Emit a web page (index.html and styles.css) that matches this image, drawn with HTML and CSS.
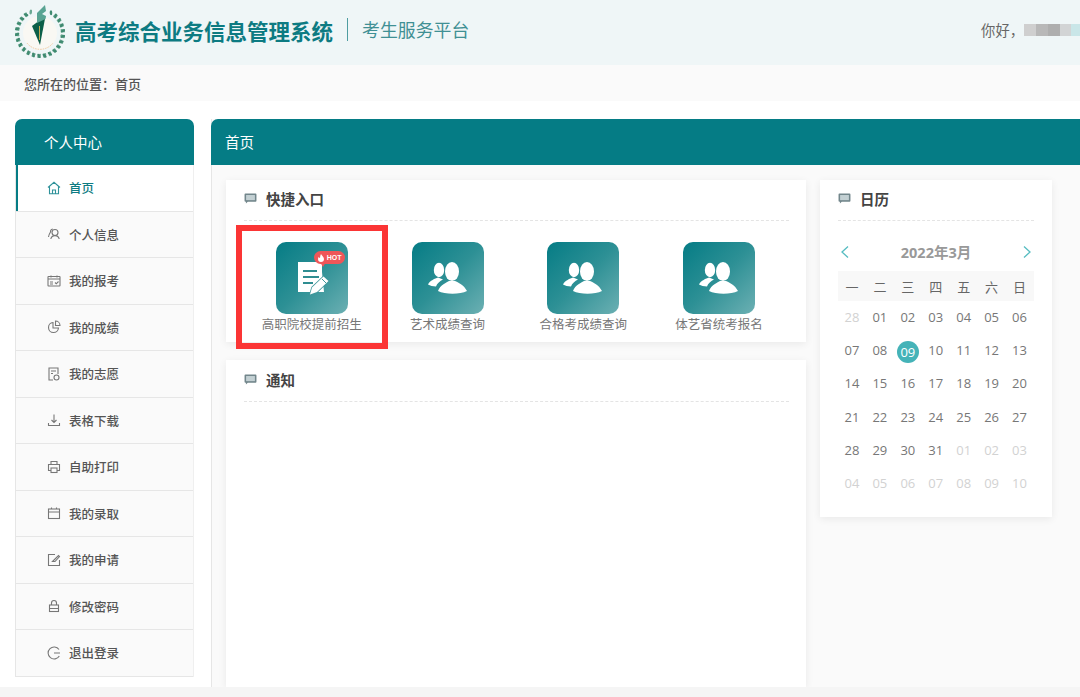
FILE: index.html
```html
<!DOCTYPE html>
<html lang="zh-CN">
<head>
<meta charset="utf-8">
<title>高考综合业务信息管理系统</title>
<link rel="stylesheet" href="styles.css">
</head>
<body>
<svg class="defs" width="0" height="0" aria-hidden="true">
  <defs>
    <symbol id="chat" viewBox="0 0 14 12">
      <path d="M1.500 .5h11a1 1 0 0 1 1 1v7a1 1 0 0 1-1 1H4L2 11.500V9.500h-.5a1 1 0 0 1-1-1v-7a1 1 0 0 1 1-1z" fill="#72868b"/>
      <rect x="2.200" y="2.200" width="9.600" height="5.600" fill="#c3d0d3"/>
    </symbol>
    <symbol id="people" viewBox="0 0 72 72">
      <ellipse cx="27" cy="28" rx="5.200" ry="7.200" fill="#fff"/>
      <path d="M16 42.500C18 38.500 23 36.500 26 35.500L31 37.500C28 39 25 41.500 24 44.500C21 44.500 18 43.500 16 42.500Z" fill="#fff"/>
      <ellipse cx="40" cy="29.500" rx="7" ry="9.500" fill="#fff"/>
      <path d="M26 49C28 43 35 40.500 37 39L43 39C46 40.500 52 43 55 49C48 52.500 33 52.500 26 49Z" fill="#fff"/>
    </symbol>
    <g id="leaf">
      <ellipse cx="22" cy="8.200" rx="1.300" ry="2.500" transform="rotate(-38 22 8.200)" fill="#3f8a70"/>
      <ellipse cx="27.500" cy="8.200" rx="1.300" ry="2.500" transform="rotate(38 27.500 8.200)" fill="#6ba892"/>
    </g>
  </defs>
</svg>

<header class="topbar">
  <div class="brand">
    <svg class="logo" viewBox="0 0 50 56" aria-label="校徽">
      <circle cx="25" cy="31" r="17" fill="#f9f8f3"/>
      <path d="M12 41a16.500 16.500 0 0 0 26 0" fill="none" stroke="#eec9a0" stroke-width="1" stroke-dasharray="1.500 1"/>
      <use href="#leaf" transform="rotate(36 25 31)"/>
      <use href="#leaf" transform="rotate(50 25 31)"/>
      <use href="#leaf" transform="rotate(64 25 31)"/>
      <use href="#leaf" transform="rotate(78 25 31)"/>
      <use href="#leaf" transform="rotate(92 25 31)"/>
      <use href="#leaf" transform="rotate(106 25 31)"/>
      <use href="#leaf" transform="rotate(120 25 31)"/>
      <use href="#leaf" transform="rotate(134 25 31)"/>
      <use href="#leaf" transform="rotate(148 25 31)"/>
      <use href="#leaf" transform="rotate(162 25 31)"/>
      <use href="#leaf" transform="rotate(176 25 31)"/>
      <use href="#leaf" transform="rotate(190 25 31)"/>
      <use href="#leaf" transform="rotate(204 25 31)"/>
      <use href="#leaf" transform="rotate(218 25 31)"/>
      <use href="#leaf" transform="rotate(232 25 31)"/>
      <use href="#leaf" transform="rotate(246 25 31)"/>
      <use href="#leaf" transform="rotate(260 25 31)"/>
      <use href="#leaf" transform="rotate(274 25 31)"/>
      <use href="#leaf" transform="rotate(288 25 31)"/>
      <use href="#leaf" transform="rotate(302 25 31)"/>
      <use href="#leaf" transform="rotate(316 25 31)"/>
      <use href="#leaf" transform="rotate(330 25 31)"/>
      <path d="M17 24 L30.500 14 L25 43 Z" fill="#0c5f48"/>
      <path d="M22 11 L30 3 L31 9 L27 12 L31 14 L30.500 17 L22 21 Z" fill="#5aa493"/>
      <path d="M24.500 24 L24.500 38" stroke="#c8a850" stroke-width="1"/>
    </svg>
    <h1 class="title">高考综合业务信息管理系统</h1>
    <span class="title-sep"></span>
    <span class="subtitle">考生服务平台</span>
  </div>
  <div class="user">
    <span class="hello">你好，</span>
    <span class="mask"><i class="m1"></i><i class="m2"></i><i class="m3"></i><i class="m4"></i><i class="m5"></i></span>
  </div>
</header>

<div class="crumbs"><span>您所在的位置：</span><span>首页</span></div>

<div class="layout">
  <aside class="side">
    <div class="side-head">个人中心</div>
    <nav class="menu">
      <a class="item active"><svg class="ico" viewBox="0 0 14 14"><path d="M1 6.500 7 1.300l6 5.200M2.500 5.500v7.200h9V5.500M5.500 12.700V9h3v3.700"/></svg>首页</a>
      <a class="item"><svg class="ico" viewBox="0 0 14 14"><circle cx="8" cy="5.500" r="3"/><path d="M3.800 12c.4-2 2-3.400 4.200-3.400s3.800 1.400 4.200 3.400M5.800 2C4 2.300 3.400 3.800 3.500 5 2.500 6.500 1.800 8 1.500 10"/></svg>个人信息</a>
      <a class="item"><svg class="ico" viewBox="0 0 14 14"><rect x="1" y="2.500" width="12" height="9.500" rx=".5"/><path d="M1 5h12M4 1.500v2M10 1.500v2M3 8h3M3 10h3M8 8.500l1.300 1.300L11.500 7.500"/></svg>我的报考</a>
      <a class="item"><svg class="ico" viewBox="0 0 14 14"><path d="M6 2.500a5 5 0 1 0 5.500 5.500H6z"/><path d="M8.500 1a4.500 4.500 0 0 1 4.500 4.500H8.500z"/></svg>我的成绩</a>
      <a class="item"><svg class="ico" viewBox="0 0 14 14"><path d="M6 13H2V1h9v6"/><path d="M4 4h5M4 6.500h2"/><circle cx="9.500" cy="10.500" r="2.500"/></svg>我的志愿</a>
      <a class="item"><svg class="ico" viewBox="0 0 14 14"><path d="M7 1.500v8M4.500 7 7 9.500 9.500 7M1.500 10v2.500h11V10"/></svg>表格下载</a>
      <a class="item"><svg class="ico" viewBox="0 0 14 14"><path d="M4 4.500V1.500h6v3M4 10.500H1.500V4.500h11v6H10"/><rect x="4" y="8" width="6" height="4.500"/></svg>自助打印</a>
      <a class="item"><svg class="ico" viewBox="0 0 14 14"><rect x="1.500" y="3" width="11" height="9.500"/><path d="M1.500 6h11M4.500 1.500V3M9.500 1.500V3"/></svg>我的录取</a>
      <a class="item"><svg class="ico" viewBox="0 0 14 14"><path d="M12.500 7v5.500h-11v-11H8"/><path d="M5.500 8.500 11.500 2.500l1 1-4.500 5z"/></svg>我的申请</a>
      <a class="item"><svg class="ico" viewBox="0 0 14 14"><rect x="2.500" y="6" width="9" height="6.500"/><path d="M4.500 6V4a2.500 2.500 0 0 1 5 0v2M2.500 9.500h9"/></svg>修改密码</a>
      <a class="item"><svg class="ico" viewBox="0 0 14 14"><path d="M12 3.500A6 6 0 1 0 12.300 10M7 7h6"/></svg>退出登录</a>
    </nav>
  </aside>

  <main class="panel">
    <div class="panel-head">首页</div>
    <div class="panel-body">
      <div class="col-main">
        <section class="card quick">
          <h2 class="card-title"><svg class="chat"><use href="#chat"/></svg>快捷入口</h2>
          <div class="tiles">
            <a class="tile">
              <span class="tile-icon">
                <svg viewBox="0 0 72 72">
                  <path d="M22 20h24v10l2 20H22z" fill="#fff"/>
                  <path d="M27 29h14M27 35h16M27 41h10" stroke="#2f8d91" stroke-width="2"/>
                  <path d="M34 52.500l2-7L47.500 34.500l5 4.500L41 50z" fill="#fff" stroke="#3f979b" stroke-width="1.500" paint-order="stroke"/>
                  <path d="M46 37l4 4" stroke="#3f979b" stroke-width="1"/>
                </svg>
                <span class="hot"><svg class="flame" viewBox="0 0 8 8"><path d="M4 0c.5 1.500 3 2.500 3 5a3 3 0 0 1-6 0c0-1 .4-1.800 1-2.300C2 3.500 2.500 4 3 4c.2-1.300.3-2.800 1-4z" fill="#fff"/></svg>HOT</span>
              </span>
              <span class="tile-text">高职院校提前招生</span>
            </a>
            <a class="tile"><span class="tile-icon"><svg viewBox="0 0 72 72"><use href="#people"/></svg></span><span class="tile-text">艺术成绩查询</span></a>
            <a class="tile"><span class="tile-icon"><svg viewBox="0 0 72 72"><use href="#people"/></svg></span><span class="tile-text">合格考成绩查询</span></a>
            <a class="tile"><span class="tile-icon"><svg viewBox="0 0 72 72"><use href="#people"/></svg></span><span class="tile-text">体艺省统考报名</span></a>
          </div>
        </section>
        <section class="card notice">
          <h2 class="card-title notice-title"><svg class="chat"><use href="#chat"/></svg>通知</h2>
        </section>
      </div>

      <section class="card calendar">
        <h2 class="card-title"><svg class="chat"><use href="#chat"/></svg>日历</h2>
        <div class="cal-month">
          <svg class="arrow" viewBox="0 0 10 14"><path d="M8 1.500 2 7l6 5.500"/></svg>
          <span>2022年3月</span>
          <svg class="arrow" viewBox="0 0 10 14"><path d="M2 1.500 8 7l-6 5.500"/></svg>
        </div>
        <div class="cal-week"><span>一</span><span>二</span><span>三</span><span>四</span><span>五</span><span>六</span><span>日</span></div>
        <div class="cal-days">
          <span class="off">28</span><span>01</span><span>02</span><span>03</span><span>04</span><span>05</span><span>06</span>
          <span>07</span><span>08</span><span class="today"><b>09</b></span><span>10</span><span>11</span><span>12</span><span>13</span>
          <span>14</span><span>15</span><span>16</span><span>17</span><span>18</span><span>19</span><span>20</span>
          <span>21</span><span>22</span><span>23</span><span>24</span><span>25</span><span>26</span><span>27</span>
          <span>28</span><span>29</span><span>30</span><span>31</span><span class="off">01</span><span class="off">02</span><span class="off">03</span>
          <span class="off">04</span><span class="off">05</span><span class="off">06</span><span class="off">07</span><span class="off">08</span><span class="off">09</span><span class="off">10</span>
        </div>
      </section>
    </div>
  </main>
</div>
<div class="foot"></div>
<div class="redbox"></div>
</body>
</html>
```

FILE: styles.css
```css
* { box-sizing: border-box; }
html, body { margin: 0; padding: 0; height: 697px; overflow: hidden; }
body {
  position: relative;
  background: #fff;
  color: #555;
  font-family: "Open Sans", "Noto Sans CJK SC", sans-serif;
  font-size: 12.5px;
  display: flex;
  flex-direction: column;
}
.defs { position: absolute; }

.topbar {
  height: 65px;
  flex: none;
  background: #eff6f7;
  display: flex;
  justify-content: space-between;
  padding-left: 15px;
}
.brand { display: flex; align-items: flex-start; }
.logo { width: 50px; height: 56px; margin-top: 2px; margin-right: 10px; }
.title {
  margin: 0;
  font-size: 21.5px;
  line-height: 61px;
  font-weight: 700;
  color: #0d7b82;
  font-family: "Noto Sans CJK SC", sans-serif;
}
.title-sep { width: 1px; height: 23px; background: #4f9da1; margin: 18px 14px 0; }
.subtitle {
  font-size: 17.9px;
  line-height: 59px;
  color: #3f9094;
  font-family: "Noto Sans CJK SC", sans-serif;
}
.user { display: flex; align-items: center; height: 58px; }
.hello { font-size: 14.3px; color: #666; font-family: "Noto Sans CJK SC", sans-serif; white-space: nowrap; }
.mask { display: flex; height: 12px; width: 56px; flex: none; margin-top: 2px; }
.mask i { display: block; height: 100%; }
.m1 { width: 12px; background: #cfcfcf; }
.m2 { width: 12px; background: #b8b8b8; }
.m3 { width: 12px; background: #aeaeae; }
.m4 { width: 11px; background: #d2d4d5; }
.m5 { width: 9px; background: #c9e6e8; }

.crumbs {
  height: 36px;
  flex: none;
  background: #fafafa;
  padding-left: 24px;
  font-size: 13px;
  line-height: 37px;
  color: #555;
  font-weight: 500;
  font-family: "Noto Sans CJK SC", sans-serif;
}

.layout {
  flex: 1;
  min-height: 0;
  display: flex;
  align-items: flex-start;
  padding: 18px 0 0 15px;
  gap: 17px;
}

.side { width: 179px; flex: none; }
.side-head {
  height: 46px;
  background: #057c85;
  color: #fff;
  border-radius: 7px 7px 0 0;
  padding-left: 29px;
  line-height: 45px;
  font-size: 14.5px;
  font-family: "Noto Sans CJK SC", sans-serif;
}
.menu { display: flex; flex-direction: column; border-left: 1px solid #e6e6e6; border-right: 1px solid #efefef; }
.item {
  height: 46.5px;
  display: flex;
  align-items: center;
  background: #fafafa;
  border-bottom: 1px solid #e6e6e6;
  padding-left: 31px;
  color: #555;
  font-weight: 500;
  font-family: "Noto Sans CJK SC", sans-serif;
}
.item.active {
  background: #fff;
  color: #0d7b82;
  box-shadow: inset 2px 0 0 #057c85;
}
.ico {
  width: 14px;
  height: 14px;
  margin-right: 8px;
  fill: none;
  stroke: #777;
  stroke-width: 1.100;
}
.active .ico { stroke: #2f929a; }

.panel {
  flex: 1;
  min-width: 0;
  align-self: stretch;
  display: flex;
  flex-direction: column;
  background: #fafafa;
  border-left: 1px solid #e6e6e6;
}
.panel-head {
  height: 46px;
  flex: none;
  margin-left: -1px;
  background: #057c85;
  color: #fff;
  border-radius: 7px 0 0 0;
  padding-left: 14px;
  line-height: 45px;
  font-size: 14.5px;
  font-family: "Noto Sans CJK SC", sans-serif;
}
.panel-body {
  flex: 1;
  min-height: 0;
  display: flex;
  align-items: flex-start;
  gap: 14px;
  padding: 15px 0 0 14px;
}
.col-main {
  width: 580px;
  flex: none;
  align-self: stretch;
  display: flex;
  flex-direction: column;
  gap: 18px;
}
.card {
  background: #fff;
  box-shadow: 0 2px 8px rgba(0, 0, 0, .07);
  padding: 0 18px;
}
.card-title {
  margin: 0;
  height: 41px;
  padding-bottom: 3px;
  display: flex;
  align-items: center;
  border-bottom: 1px dashed #e4e4e4;
  color: #444;
  font-size: 14.5px;
  font-weight: 700;
  font-family: "Noto Sans CJK SC", sans-serif;
}
.notice-title { height: 42px; }
.chat { width: 13px; height: 11px; margin-right: 9px; }

.quick { height: 162px; flex: none; padding-right: 17px; }
.tiles { display: grid; grid-template-columns: repeat(4, 135.75px); padding-top: 21px; }
.tile { display: flex; flex-direction: column; align-items: center; }
.tile-icon {
  position: relative;
  width: 72px;
  height: 72px;
  border-radius: 10px;
  background: linear-gradient(135deg, #057c85 0%, #2d9095 50%, #6cb0b3 100%);
}
.tile-icon > svg { display: block; width: 72px; height: 72px; }
.hot {
  position: absolute;
  left: 38px;
  top: 9px;
  width: 31px;
  height: 13px;
  display: flex;
  align-items: center;
  justify-content: center;
  gap: 1.500px;
  background: #ef5659;
  border-radius: 7px;
  color: #fff;
  font: 700 7px/1 "Liberation Sans", sans-serif;
}
.hot::after {
  content: "";
  position: absolute;
  left: 6px;
  top: 11px;
  border: 3px solid transparent;
  border-top: 5px solid #ef5659;
  border-bottom: 0;
}
.flame { width: 8px; height: 8px; }
.tile-text {
  margin-top: 1px;
  line-height: 18px;
  color: #777;
  font-family: "Noto Sans CJK SC", sans-serif;
}
.notice { flex: 1; padding-right: 17px; }

.calendar { width: 232px; height: 337px; flex: none; }
.cal-month {
  height: 50px;
  display: flex;
  align-items: center;
  justify-content: space-between;
  padding: 11px 2px 0 2px;
  color: #999;
  font-size: 14.5px;
  font-weight: 700;
  font-family: "Open Sans", "Noto Sans CJK SC", sans-serif;
}
.arrow { width: 10px; height: 14px; fill: none; stroke: #56bcc1; stroke-width: 1.300; }
.cal-week {
  display: grid;
  grid-template-columns: repeat(7, 1fr);
  height: 30px;
  padding-right: .5px;
  background: #f8f8f8;
  align-items: center;
  text-align: center;
  color: #666;
  font-size: 13px;
  font-family: "Noto Sans CJK SC", sans-serif;
}
.cal-days {
  display: grid;
  grid-template-columns: repeat(7, 1fr);
  grid-auto-rows: 33.2px;
  padding-top: 1px;
  padding-right: .5px;
  text-align: center;
  color: #777;
  font-size: 13px;
  line-height: 31px;
}
.off { color: #d2d2d2; }
.today { display: flex; align-items: center; justify-content: center; }
.today b {
  width: 22px;
  height: 22px;
  border-radius: 50%;
  background: #45b3b8;
  color: #fff;
  font-weight: 400;
  line-height: 22px;
}

.foot { height: 10px; flex: none; background: #f5f5f5; }

.redbox {
  position: absolute;
  left: 236px;
  top: 225px;
  width: 152px;
  height: 124px;
  border: 6px solid #fb3535;
  pointer-events: none;
}
```
